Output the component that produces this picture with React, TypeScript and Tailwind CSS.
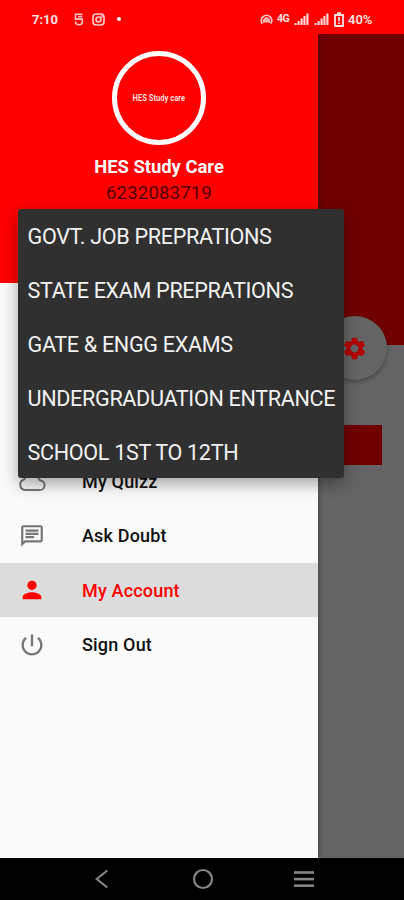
import React from "react";

const exams = [
  "GOVT. JOB PREPRATIONS",
  "STATE EXAM PREPRATIONS",
  "GATE & ENGG EXAMS",
  "UNDERGRADUATION ENTRANCE",
  "SCHOOL 1ST TO 12TH",
];

function Signal() {
  return (
    <svg width="15" height="12" viewBox="0 0 15 12" fill="#ffd6d6">
      <rect x="0.5" y="10" width="2.2" height="2" />
      <rect x="3.5" y="8" width="2.2" height="4" />
      <rect x="6.5" y="5.5" width="2.2" height="6.5" />
      <rect x="9.4" y="3" width="2.1" height="9" />
      <rect x="12.3" y="0.5" width="2.2" height="11.5" />
    </svg>
  );
}

function StatusBar() {
  return (
    <header className="flex h-[34px] shrink-0 items-center bg-[#ff0000] pt-[4px] pl-8 text-[#ffe0e0]">
      <span className="w-[42px] pt-px text-[13px] leading-4 font-bold">7:10</span>
      <svg width="10" height="13" viewBox="0 0 10 13" fill="none" stroke="#ffc4c4" strokeWidth="1.6">
        <path d="M8.6 1.2H1.5v4.9h6.8v3.2c0 1.6-1.4 2.5-3.4 2.5S1.5 10.9 1.5 9.3V8.6M8.3 3.6H4.2" />
      </svg>
      <svg className="ml-[8px]" width="13" height="13" viewBox="0 0 13 13" fill="none" stroke="#ffd0d0" strokeWidth="1.6">
        <rect x="1" y="1" width="11" height="11" rx="3.2" />
        <circle cx="6.5" cy="6.5" r="2.5" />
        <circle cx="9.6" cy="3.5" r="0.4" />
      </svg>
      <span className="ml-[12px] size-1 rounded-full bg-white" />
      <svg className="ml-[139px]" width="13" height="11" viewBox="0 0 13 11" fill="none" stroke="#ffbcbc" strokeWidth="1.9">
        <path d="M2.3 9.6A5.2 5.2 0 1 1 10.7 9.6M4.4 8.6A2.6 2.6 0 1 1 8.6 8.6" />
        <circle cx="6.5" cy="7" r="0.7" fill="#ffbcbc" />
      </svg>
      <span className="ml-[4px] w-[16px] text-[10.5px] leading-4 font-bold tracking-[-0.6px]">4G</span>
      <span className="ml-px"><Signal /></span>
      <span className="ml-[5px]"><Signal /></span>
      <svg className="ml-[5px]" width="10" height="15" viewBox="0 0 10 15" fill="none" stroke="#ffe0e0" strokeWidth="1.8">
        <path d="M3 1.2h4M1 3h8v11H1z" />
        <path d="M5 5v4.2M5 10.5v1.6" strokeWidth="1.8" />
      </svg>
      <span className="ml-[4px] pt-px text-[13px] leading-4 font-semibold">40%</span>
    </header>
  );
}

function Item({ icon, label, active }: { icon: React.ReactNode; label: string; active?: boolean }) {
  return (
    <li className={active ? "flex h-[54.3px] items-center bg-[#dcdcdc] pl-5 text-[#ff0000]" : "flex h-[54.3px] items-center pl-5 text-[#111]"}>
      <span className={active ? "flex w-[62px]" : "flex w-[62px] text-[#757575]"}>{icon}</span>
      <span className="text-[18px] font-medium tracking-[0.18px]">{label}</span>
    </li>
  );
}

function Drawer() {
  return (
    <aside className="relative flex w-[318px] shrink-0 flex-col bg-[#fafafa] shadow-[0_0_5px_rgba(0,0,0,0.45)]">
      <div className="flex h-[249px] flex-col items-center bg-[#ff0000] pt-[17px]">
        <div className="flex size-[94px] items-center justify-center rounded-full border-[5.5px] border-white">
          <span className="origin-center scale-x-[0.8] pt-px text-[9.5px] font-bold whitespace-nowrap text-[#ffdcdc]">HES Study care</span>
        </div>
        <h1 className="mt-[9px] text-[18.4px] leading-[26px] font-bold text-white">HES Study Care</h1>
        <p className="text-[18.5px] leading-[26px] tracking-[0.2px] text-[#500000]">6232083719</p>
      </div>
      <ul className="mt-[171.5px]">
        <Item
          label="My Quizz"
          icon={
            <svg width="28" height="28" viewBox="0 0 28 28" className="-ml-0.5" fill="none" stroke="currentColor" strokeWidth="2">
              <path d="M7 22h14.5a4.8 4.8 0 0 0 .5-9.6A9 9 0 0 0 6 11.5 5.4 5.4 0 0 0 7 22z" />
            </svg>
          }
        />
        <Item
          label="Ask Doubt"
          icon={
            <svg width="26" height="26" viewBox="0 0 24 24" className="-ml-px" fill="currentColor">
              <path d="M4 4h16v12H5.17L4 17.17V4m0-2c-1.1 0-1.99.9-1.99 2L2 22l4-4h14c1.1 0 2-.9 2-2V4c0-1.1-.9-2-2-2H4zm2 10h8v2H6v-2zm0-3h12v2H6V9zm0-3h12v2H6V6z" />
            </svg>
          }
        />
        <Item
          active
          label="My Account"
          icon={
            <svg width="28" height="28" viewBox="0 0 24 24" className="-ml-0.5" fill="currentColor">
              <path d="M12 12c2.21 0 4-1.79 4-4s-1.79-4-4-4-4 1.79-4 4 1.79 4 4 4zm0 2c-2.67 0-8 1.34-8 4v2h16v-2c0-2.66-5.33-4-8-4z" />
            </svg>
          }
        />
        <Item
          label="Sign Out"
          icon={
            <svg width="28" height="28" viewBox="0 0 24 24" className="-ml-0.5" fill="currentColor">
              <path d="M13 3h-2v10h2V3zm4.83 2.17l-1.42 1.42C17.99 7.86 19 9.81 19 12c0 3.87-3.13 7-7 7s-7-3.13-7-7c0-2.19 1.01-4.14 2.58-5.42L6.17 5.17C4.23 6.82 3 9.26 3 12c0 4.97 4.03 9 9 9s9-4.03 9-9c0-2.74-1.23-5.18-3.17-6.83z" />
            </svg>
          }
        />
      </ul>
    </aside>
  );
}

function DimmedPage() {
  return (
    <section className="flex flex-1 flex-col bg-[#646464]">
      <div className="h-[311px] bg-[#700000]" />
      <div className="-mt-[29px] ml-[5px] flex size-[64px] items-center justify-center rounded-full bg-[#646464] pr-px shadow-[0_2px_4px_rgba(0,0,0,0.3)]">
        <svg width="27" height="27" viewBox="0 0 24 24" fill="#b40000">
          <path d="M19.14 12.94c.04-.3.06-.61.06-.94 0-.32-.02-.64-.07-.94l2.03-1.58c.18-.14.23-.41.12-.61l-1.92-3.32c-.12-.22-.37-.29-.59-.22l-2.39.96c-.5-.38-1.03-.7-1.62-.94l-.36-2.54c-.04-.24-.24-.41-.48-.41h-3.84c-.24 0-.43.17-.47.41l-.36 2.54c-.59.24-1.13.57-1.62.94l-2.39-.96c-.22-.08-.47 0-.59.22L2.74 8.87c-.12.21-.08.47.12.61l2.03 1.58c-.05.3-.09.63-.09.94s.02.64.07.94l-2.03 1.58c-.18.14-.23.41-.12.61l1.92 3.32c.12.22.37.29.59.22l2.39-.96c.5.38 1.03.7 1.62.94l.36 2.54c.05.24.24.41.48.41h3.84c.24 0 .44-.17.47-.41l.36-2.54c.59-.24 1.13-.56 1.62-.94l2.39.96c.22.08.47 0 .59-.22l1.92-3.32c.12-.22.07-.47-.12-.61l-2.01-1.58zM12 15.6c-1.98 0-3.6-1.62-3.6-3.6s1.62-3.6 3.6-3.6 3.6 1.62 3.6 3.6-1.62 3.6-3.6 3.6z" />
        </svg>
      </div>
      <div className="mt-[45px] h-10 w-16 bg-[#700000]" />
    </section>
  );
}

function NavigationBar() {
  return (
    <nav className="relative flex h-[42px] shrink-0 items-center bg-black pl-[94px] text-[#858585]">
      <svg width="14" height="20" viewBox="0 0 14 20" fill="none" stroke="currentColor" strokeWidth="2.2">
        <path d="M13.3 1.5 2.8 10l10.5 8.5" />
      </svg>
      <svg className="ml-[84px]" width="22" height="22" viewBox="0 0 22 22" fill="none" stroke="currentColor" strokeWidth="2.2">
        <circle cx="11" cy="11" r="9" />
      </svg>
      <svg className="ml-[80px]" width="20" height="18" viewBox="0 0 20 18" fill="currentColor">
        <rect y="1.2" width="20" height="2.6" />
        <rect y="7.8" width="20" height="2.6" />
        <rect y="14.4" width="20" height="2.6" />
      </svg>
    </nav>
  );
}

export default function App() {
  return (
    <div className="relative flex h-[900px] w-[404px] flex-col overflow-hidden font-[Roboto,sans-serif]">
      <StatusBar />
      <main className="flex min-h-0 flex-1 overflow-hidden">
        <Drawer />
        <DimmedPage />
      </main>
      <NavigationBar />
      <ul className="absolute top-[209px] left-[18px] h-[269px] w-[326px] rounded-[3px] bg-[#303030] shadow-[0_6px_16px_rgba(0,0,0,0.35)]">
        {exams.map((name) => (
          <li key={name} className="flex h-[54.2px] items-center pt-[1.5px] pl-[9.5px] text-[21.6px] tracking-[-0.33px] whitespace-nowrap text-[#f2f2f2]">
            {name}
          </li>
        ))}
      </ul>
    </div>
  );
}
